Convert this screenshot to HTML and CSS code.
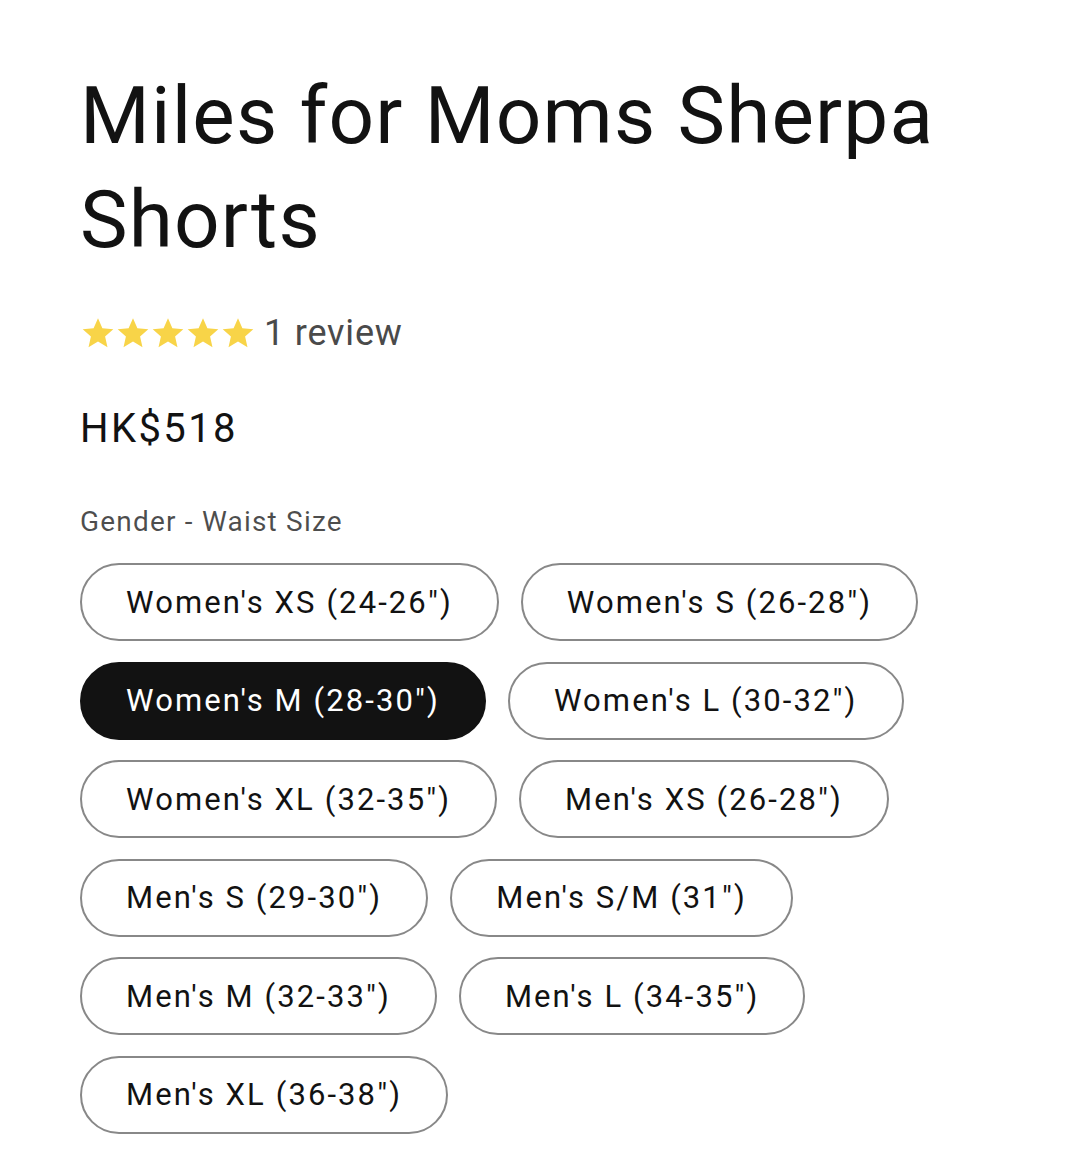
FILE: index.html
```html
<!DOCTYPE html>
<html lang="en">
<head>
    <meta charset="UTF-8">
    <meta name="viewport" content="width=device-width, initial-scale=1.0">
    <title>Miles for Moms Sherpa Shorts</title>
    <link rel="stylesheet" href="styles.css">
</head>
<body>

    <div class="product-info">
        <h1 class="product-title">Miles for Moms Sherpa Shorts</h1>

        <div class="rating">
            <div class="stars">
                <svg viewBox="0 0 24 24"><path d="M12 1.5l3.1 7.1 7.7.7-5.8 5.1 1.7 7.6L12 18l-6.7 4 1.7-7.6-5.8-5.1 7.7-.7z"/></svg>
                <svg viewBox="0 0 24 24"><path d="M12 1.5l3.1 7.1 7.7.7-5.8 5.1 1.7 7.6L12 18l-6.7 4 1.7-7.6-5.8-5.1 7.7-.7z"/></svg>
                <svg viewBox="0 0 24 24"><path d="M12 1.5l3.1 7.1 7.7.7-5.8 5.1 1.7 7.6L12 18l-6.7 4 1.7-7.6-5.8-5.1 7.7-.7z"/></svg>
                <svg viewBox="0 0 24 24"><path d="M12 1.5l3.1 7.1 7.7.7-5.8 5.1 1.7 7.6L12 18l-6.7 4 1.7-7.6-5.8-5.1 7.7-.7z"/></svg>
                <svg viewBox="0 0 24 24"><path d="M12 1.5l3.1 7.1 7.7.7-5.8 5.1 1.7 7.6L12 18l-6.7 4 1.7-7.6-5.8-5.1 7.7-.7z"/></svg>
            </div>
            <span class="rating-count">1 review</span>
        </div>

        <div class="price">HK$518</div>

        <fieldset class="variant-picker">
            <legend class="variant-label">Gender - Waist Size</legend>
            <div class="pills">
                <label class="pill">Women's XS (24-26")</label>
                <label class="pill">Women's S (26-28")</label>
                <label class="pill pill-active">Women's M (28-30")</label>
                <label class="pill">Women's L (30-32")</label>
                <label class="pill">Women's XL (32-35")</label>
                <label class="pill">Men's XS (26-28")</label>
                <label class="pill">Men's S (29-30")</label>
                <label class="pill">Men's S/M (31")</label>
                <label class="pill">Men's M (32-33")</label>
                <label class="pill">Men's L (34-35")</label>
                <label class="pill">Men's XL (36-38")</label>
            </div>
        </fieldset>
    </div>

</body>
</html>
```

FILE: styles.css
```css
body {
    font-family: Roboto, "Liberation Sans", sans-serif;
    background-color: #FFFFFF;
    color: #121212;
    margin: 0;
}
.product-info {
    padding: 64px 80px 40px 80px;
}
.product-title {
    font-size: 80px;
    font-weight: 400;
    line-height: 104px;
    letter-spacing: 1.2px;
    margin: 0;
    max-width: 900px;
}
.rating {
    display: flex;
    align-items: center;
    margin-top: 40px;
}
.stars {
    display: flex;
    gap: 1px;
    margin-left: 1px;
}
.stars svg {
    width: 34px;
    height: 34px;
    fill: #F8D448;
}
.rating-count {
    font-size: 36px;
    color: #4a4a4a;
    letter-spacing: 0.8px;
    margin-left: 9px;
}
.price {
    font-size: 40px;
    letter-spacing: 2.4px;
    margin-top: 51px;
}
.variant-picker {
    border: none;
    padding: 0;
    margin: 53px 0 0 0;
}
.variant-label {
    padding: 0;
    font-size: 28px;
    letter-spacing: 1.2px;
    color: rgba(18, 18, 18, 0.75);
    margin-bottom: 25px;
}
.pills {
    display: flex;
    flex-wrap: wrap;
    column-gap: 22px;
    row-gap: 20.6px;
}
.pill {
    display: flex;
    align-items: center;
    height: 78px;
    box-sizing: border-box;
    padding: 0 44px;
    border: 2px solid rgba(18, 18, 18, 0.5);
    border-radius: 40px;
    font-size: 31px;
    letter-spacing: 2.1px;
    color: #121212;
}
.pill-active {
    background: #121212;
    border-color: #121212;
    color: #FFFFFF;
}
```
